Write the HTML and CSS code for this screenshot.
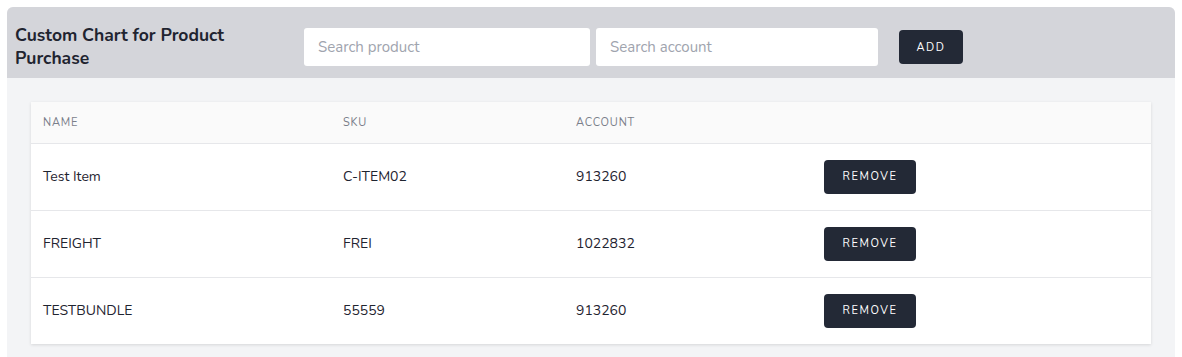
FILE: index.html
```html
<!DOCTYPE html>
<html>
<head>
<meta charset="utf-8">
<link rel="stylesheet" href="styles.css">
</head>
<body>
<div class="panel">
  <div class="toolbar">
    <h1 class="title">Custom Chart for Product Purchase</h1>
    <input class="search search-product" type="text" placeholder="Search product">
    <input class="search search-account" type="text" placeholder="Search account">
    <button class="btn btn-add">ADD</button>
  </div>
  <div class="content">
    <div class="card">
      <table class="items">
        <colgroup>
          <col class="c-name"><col class="c-sku"><col class="c-acc"><col class="c-act">
        </colgroup>
        <thead>
          <tr><th>Name</th><th>SKU</th><th>Account</th><th></th></tr>
        </thead>
        <tbody>
          <tr><td>Test Item</td><td>C-ITEM02</td><td>913260</td><td><button class="btn btn-remove">REMOVE</button></td></tr>
          <tr><td>FREIGHT</td><td>FREI</td><td>1022832</td><td><button class="btn btn-remove">REMOVE</button></td></tr>
          <tr><td>TESTBUNDLE</td><td>55559</td><td>913260</td><td><button class="btn btn-remove">REMOVE</button></td></tr>
        </tbody>
      </table>
    </div>
  </div>
</div>
</body>
</html>
```
FILE: styles.css
```css
* { box-sizing: border-box; }
html, body { background: #ffffff; }
body {
  margin: 7px;
  font-family: "Nunito", Lato, "Noto Sans", sans-serif;
  color: #1f2430;
}
.panel {
  width: 1168px;
  border-radius: 6px 6px 0 0;
  overflow: hidden;
  background: #f3f4f6;
}
.toolbar {
  height: 71px;
  background: #d4d5da;
  display: flex;
  align-items: center;
  padding: 9px 0 0 8px;
}
.title {
  margin: 0;
  width: 289px;
  padding-right: 50px;
  font-size: 17.5px;
  font-weight: 700;
  line-height: 23px;
  color: #1f2430;
}
.search {
  height: 38px;
  border: none;
  border-radius: 3px;
  background: #ffffff;
  font-family: inherit;
  font-size: 15px;
  padding: 0 14px;
  color: #1f2430;
  outline: none;
}
.search::placeholder { color: #a0a4ae; }
.search-product { width: 286px; margin-right: 6px; }
.search-account { width: 282px; margin-right: 21px; }
.btn {
  border: none;
  background: #232936;
  color: #ffffff;
  font-family: inherit;
  font-size: 11px;
  letter-spacing: 1.6px;
  border-radius: 4px;
  cursor: pointer;
}
.btn-add { width: 64px; height: 34px; }
.content {
  padding: 24px 24px 24px;
}
.card {
  background: #ffffff;
  box-shadow: 0 1px 3px rgba(0,0,0,0.12);
}
.items {
  width: 100%;
  border-collapse: collapse;
  font-size: 14px;
}
.c-name { width: 300px; }
.c-sku { width: 233px; }
.c-acc { width: 248px; }
.items th {
  height: 41px;
  text-align: left;
  font-weight: 400;
  font-size: 11px;
  letter-spacing: 0.8px;
  text-transform: uppercase;
  color: #7a7f8a;
  background: #fafafa;
  padding: 0 12px;
  border-bottom: 1px solid #e6e7ea;
}
.items td {
  height: 67px;
  padding: 0 12px;
  color: #1f2430;
  border-bottom: 1px solid #e6e7ea;
}
.items tbody tr:last-child td { border-bottom: none; }
.btn-remove { width: 92px; height: 34px; }
```
